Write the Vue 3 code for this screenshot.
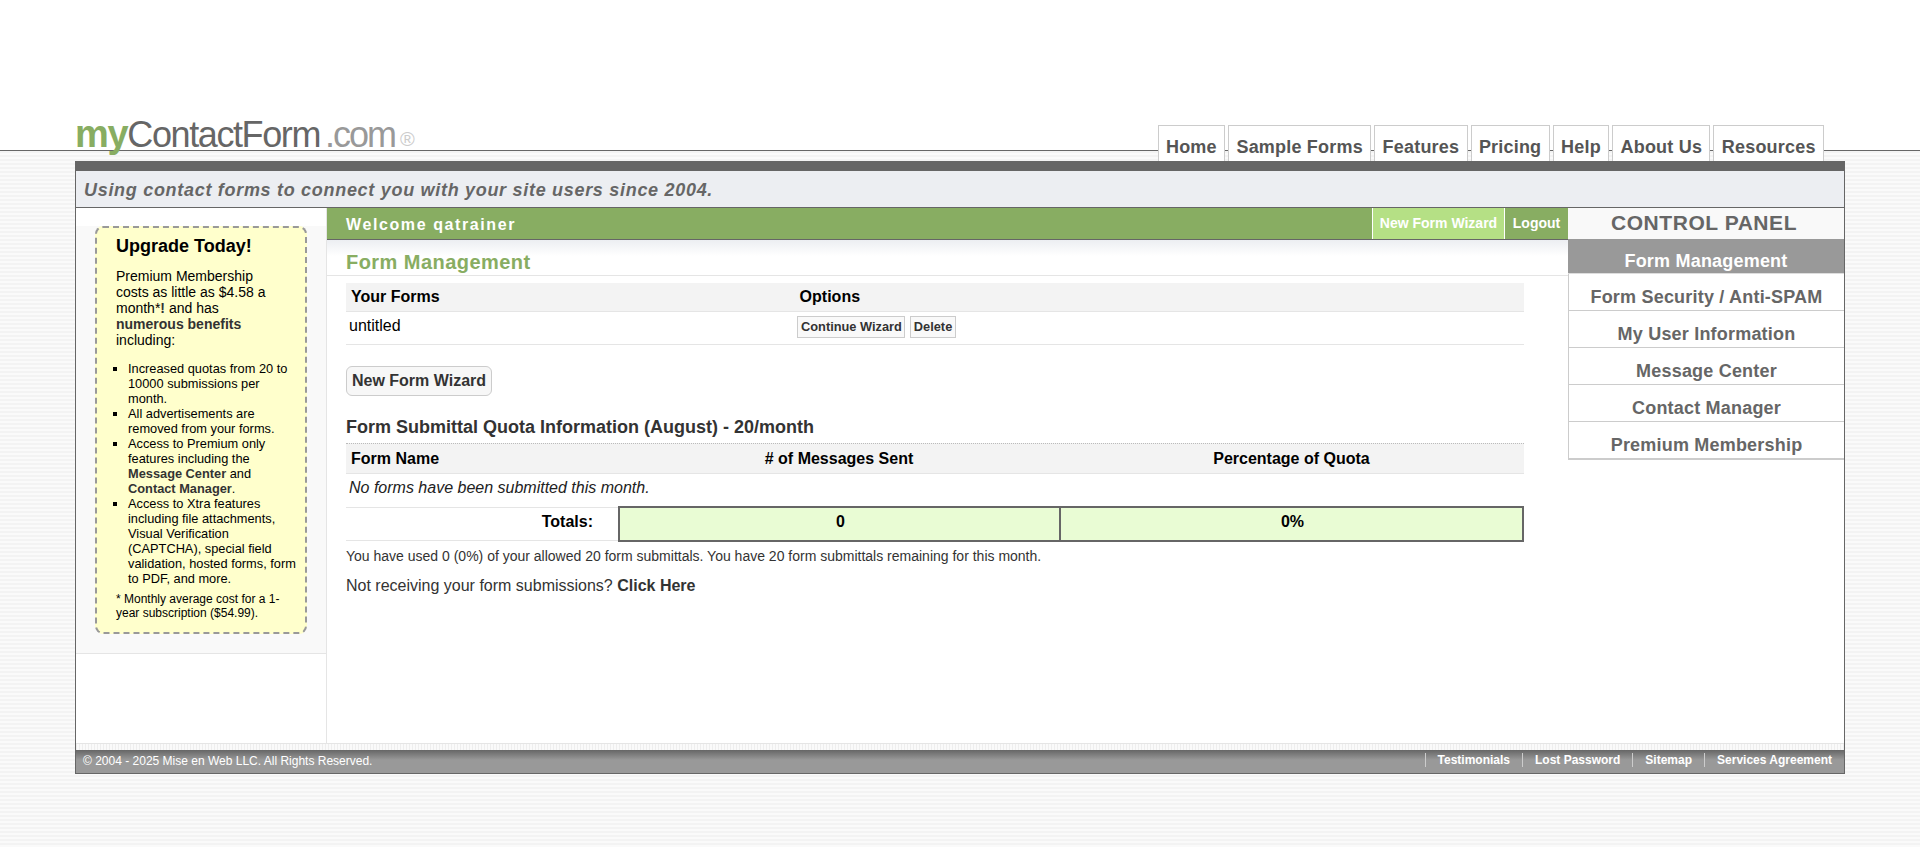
<script setup>
const tabs = ['Home', 'Sample Forms', 'Features', 'Pricing', 'Help', 'About Us', 'Resources']
const panel = ['Form Security / Anti-SPAM', 'My User Information', 'Message Center', 'Contact Manager', 'Premium Membership']
const links = ['Testimonials', 'Lost Password', 'Sitemap', 'Services Agreement']
</script>

<template>
  <div class="page">
    <header class="top">
      <div class="logo"><span class="my">my</span><span class="cf">ContactForm</span><span class="com">.com</span><span class="reg">®</span></div>
      <nav class="tabs">
        <a v-for="t in tabs" :key="t" class="tab">{{ t }}</a>
      </nav>
    </header>

    <div class="frame">
      <div class="darkbar"></div>
      <div class="tagline">Using contact forms to connect you with your site users since 2004.</div>
      <div class="cols">
        <aside class="side">
          <div class="side-inner">
            <div class="promo">
              <h3>Upgrade Today!</h3>
              <p class="lead">Premium Membership costs as little as $4.58 a month*<b>!</b> and has <b>numerous benefits</b> including:</p>
              <ul>
                <li>Increased quotas from 20 to 10000 submissions per month.</li>
                <li>All advertisements are removed from your forms.</li>
                <li>Access to Premium only features including the <b>Message Center</b> and <b>Contact Manager</b>.</li>
                <li>Access to Xtra features including file attachments, Visual Verification (CAPTCHA), special field validation, hosted forms, form to PDF, and more.</li>
              </ul>
              <p class="note">* Monthly average cost for a 1-year subscription ($54.99).</p>
            </div>
          </div>
        </aside>

        <main class="main">
          <div class="welcome">
            <span class="hello">Welcome qatrainer</span>
            <a class="wb wizard">New Form Wizard</a>
            <a class="wb logout">Logout</a>
          </div>
          <div class="title-wrap"><h1>Form Management</h1></div>
          <div class="content">
            <div class="row-forms head">
              <b>Your Forms</b>
              <b class="opt">Options</b>
            </div>
            <div class="row-forms body">
              <span class="fname">untitled</span>
              <span class="btns"><a class="mini">Continue Wizard</a><a class="mini">Delete</a></span>
            </div>
            <button class="newbtn" type="button">New Form Wizard</button>
            <h2>Form Submittal Quota Information (August) - 20/month</h2>
            <div class="qhead">
              <b class="q1">Form Name</b>
              <b class="q2"># of Messages Sent</b>
              <b class="q3">Percentage of Quota</b>
            </div>
            <div class="none">No forms have been submitted this month.</div>
            <div class="totals">
              <b class="tl">Totals:</b>
              <div class="tcells">
                <b class="c1">0</b>
                <b class="c2">0%</b>
              </div>
            </div>
            <p class="used">You have used 0 (0%) of your allowed 20 form submittals. You have 20 form submittals remaining for this month.</p>
            <p class="notrec">Not receiving your form submissions? <b>Click Here</b></p>
          </div>
        </main>

        <aside class="right">
          <div class="cp">CONTROL PANEL</div>
          <a class="pi active">Form Management</a>
          <a v-for="p in panel" :key="p" class="pi">{{ p }}</a>
        </aside>
      </div>
      <div class="strip"></div>
      <footer class="foot">
        <span class="copy">© 2004 - 2025 Mise en Web LLC. All Rights Reserved.</span>
        <span class="flinks"><a v-for="l in links" :key="l" class="fl">{{ l }}</a></span>
      </footer>
    </div>
  </div>
</template>

<style>
html, body { margin: 0; background: #fff; }
</style>

<style scoped>
.page {
  min-height: 847px;
  overflow: hidden;
  font-family: "Liberation Sans", Arial, sans-serif;
  background: repeating-linear-gradient(180deg, #f3f3f3 0, #f3f3f3 2px, #fafafa 2px, #fafafa 4px) 0 151px no-repeat;
  background-size: 100% 696px;
}
.top {
  height: 150px;
  background: #fff;
  border-bottom: 1px solid #666;
  display: flex;
  align-items: flex-end;
  justify-content: space-between;
  padding: 0 96px 0 75px;
}
.logo { white-space: nowrap; line-height: 36px; height: 36px; margin-bottom: 1px; font-size: 36px; position: relative; top: 3px; z-index: 1; }
.my { color: #88ad62; font-weight: 700; font-size: 38px; letter-spacing: -1.3px; }
.cf { color: #666; letter-spacing: -1.4px; }
.com { color: #999; margin-left: 5px; letter-spacing: -2px; }
.reg { color: #ccc; font-size: 20px; margin-left: 5px; position: relative; top: -1px; }
.tabs { display: flex; gap: 3px; margin-bottom: -11px; position: relative; z-index: 1; }
.tab {
  height: 35px;
  line-height: 42px;
  padding: 0 7.35px;
  background: #fff;
  border: 1px solid #ccc;
  border-bottom: 0;
  font-size: 18px;
  font-weight: 700;
  letter-spacing: 0.2px;
  color: #555;
}
.frame { margin: 10px 75px 0; border-left: 1px solid #666; border-right: 1px solid #666; border-bottom: 1px solid #666; background: #fff; }
.darkbar { height: 10px; background: #666; margin: 0 -1px; }
.tagline {
  height: 36px;
  line-height: 38px;
  background: #eceef2;
  border-bottom: 1px solid #666;
  padding-left: 8px;
  font-size: 18px;
  font-weight: 700;
  font-style: italic;
  letter-spacing: 0.7px;
  color: #666;
}
.cols { display: grid; grid-template-columns: 251px 1241px 276px; height: 535px; }
.side { border-right: 1px solid #e5e5e5; }
.side-inner {
  padding: 18px 19px 19px;
  background: linear-gradient(#fff 0, #fff 18px, #f9f9f9 18px);
  border-bottom: 1px solid #e5e5e5;
}
.promo {
  background: #ffc;
  border: 2px dashed #999;
  border-radius: 8px;
  padding: 8px 6px 12px 19px;
  color: #000;
}
.promo h3 { margin: 0 0 12px; font-size: 18px; line-height: 20px; font-weight: 700; }
.lead { margin: 0 18px 13px 0; font-size: 14px; line-height: 16px; }
.lead b, .promo li b { color: #333; }
.promo ul { margin: 0 0 6px; padding: 0 1px 0 12px; list-style: square; font-size: 12.8px; line-height: 15px; }
.note { margin: 0; font-size: 12px; line-height: 14px; }
.main { min-width: 0; }
.welcome { display: flex; height: 31px; background: #88ad62; border-bottom: 1px solid #666; align-items: stretch; }
.hello { flex: 1; line-height: 33px; padding-left: 19px; color: #fff; font-weight: 700; font-size: 16px; letter-spacing: 1.6px; }
.wb { color: #fff; font-weight: 700; font-size: 14px; line-height: 30px; border-left: 1px solid #fff; text-align: center; }
.wizard { width: 131px; background: #b5e085; }
.logout { width: 63px; }
.title-wrap { height: 36px; background: linear-gradient(#eceef2, #fff 16px); border-bottom: 1px solid #e5e5e5; box-sizing: border-box; }
h1 { margin: 0; padding: 10px 0 0 19px; font-size: 20px; line-height: 24px; color: #88ad62; font-weight: 700; letter-spacing: 0.45px; }
.content { padding: 7px 44px 0 19px; }
.row-forms { display: flex; color: #000; }
.head { height: 28px; line-height: 28px; background: #f3f3f3; border-bottom: 1px solid #e5e5e5; font-size: 16px; padding-left: 5px; }
.head .opt { margin-left: 360px; }
.body { height: 32px; border-bottom: 1px solid #e5e5e5; padding-left: 3px; font-size: 16px; }
.fname { line-height: 27px; width: 448px; }
.btns { display: flex; gap: 4.5px; padding-top: 4px; }
.mini { height: 20px; line-height: 20px; padding: 0 2.5px 0 3px; border: 1px solid #ccc; font-size: 12.8px; font-weight: 700; color: #333; background: #f9f9f9; }
.newbtn { display: block; margin: 21px 0 0; width: 146px; height: 30px; padding: 0; background: #f7f7f7; border: 1px solid #ccc; border-radius: 6px; font: 700 16px "Liberation Sans", Arial, sans-serif; color: #333; }
h2 { margin: 20px 0 0; font-size: 18px; line-height: 22px; font-weight: 700; color: #333; }
.qhead { display: grid; grid-template-columns: 273px 440px 465px; margin-top: 5px; height: 29px; line-height: 29px; background: #f3f3f3; border-top: 1px dotted #bbb; border-bottom: 1px solid #e5e5e5; font-size: 16px; color: #000; }
.q1 { padding-left: 5px; }
.q2, .q3 { text-align: center; }
.none { height: 34px; line-height: 27px; padding-left: 3px; font-size: 16px; font-style: italic; color: #222; border-bottom: 1px solid #e5e5e5; box-sizing: border-box; }
.totals { display: grid; grid-template-columns: 272px 906px; height: 33px; border-bottom: 1px solid #e5e5e5; box-sizing: border-box; font-size: 16px; color: #000; }
.tl { text-align: right; padding-right: 25px; line-height: 28px; }
.tcells { display: grid; grid-template-columns: 441px 1fr; background: #e9fcd4; border: 2px solid #666; text-align: center; line-height: 28px; margin-top: -2px; height: 36px; box-sizing: border-box; }
.c1 { border-right: 2px solid #666; padding-left: 2px; }
.c2 { padding-left: 2px; }
.used { margin: 6px 0 0; font-size: 14px; line-height: 18px; color: #333; }
.notrec { margin: 11px 0 0; font-size: 16px; line-height: 20px; color: #333; }
.right { font-weight: 700; }
.cp { height: 31px; line-height: 30px; padding-right: 4px; background: #f9f9f9; text-align: center; color: #666; font-size: 21px; letter-spacing: 0.55px; }
.pi { display: block; height: 36px; line-height: 46px; overflow: hidden; text-align: center; font-size: 18px; letter-spacing: 0.2px; color: #666; border-left: 1px solid #ccc; border-bottom: 1px solid #ccc; }
.pi:last-child { border-bottom-width: 2px; }
.pi.active { height: 34px; background: #999; color: #fff; line-height: 44px; border-left: 0; border-bottom-color: #ddd; }
.strip { height: 7px; background: repeating-linear-gradient(90deg, #eee 0, #eee 1px, #fafafa 1px, #fafafa 3px); border-top: 1px solid #e5e5e5; box-sizing: border-box; }
.foot {
  height: 23px;
  background: linear-gradient(#666, #999 10px);
  display: flex;
  justify-content: space-between;
  color: #fff;
  font-size: 12px;
}
.copy { padding-left: 7px; line-height: 22px; }
.flinks { display: flex; padding-right: 12px; padding-top: 3px; }
.fl { font-weight: 700; line-height: 14px; height: 14px; padding: 0 0 0 12px; margin-left: 12px; border-left: 1px solid #ccc; }
</style>
